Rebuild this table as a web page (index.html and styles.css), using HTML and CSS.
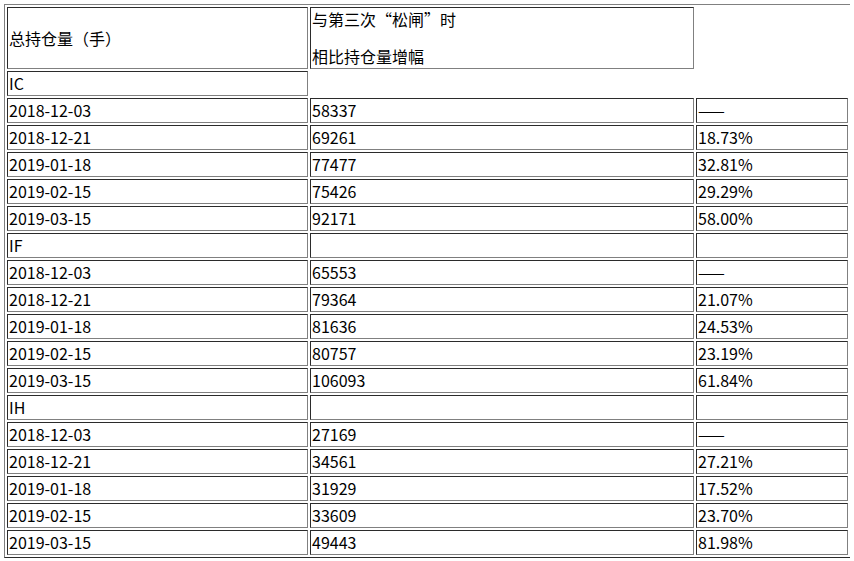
FILE: index.html
```html
<!DOCTYPE html>
<html>
<head>
<meta charset="utf-8">
<link rel="stylesheet" href="styles.css">
</head>
<body>
<table class="data">
  <colgroup>
    <col class="c1"><col class="c2"><col class="c3">
  </colgroup>
  <tr>
    <td class="head">总持仓量（手）</td>
    <td class="head"><div class="l1">与第三次“松闸”时</div><div class="l2">相比持仓量增幅</div></td>
  </tr>
  <tr><td>IC</td></tr>
  <tr><td>2018-12-03</td><td>58337</td><td>——</td></tr>
  <tr><td>2018-12-21</td><td>69261</td><td>18.73%</td></tr>
  <tr><td>2019-01-18</td><td>77477</td><td>32.81%</td></tr>
  <tr><td>2019-02-15</td><td>75426</td><td>29.29%</td></tr>
  <tr><td>2019-03-15</td><td>92171</td><td>58.00%</td></tr>
  <tr><td>IF</td><td></td><td></td></tr>
  <tr><td>2018-12-03</td><td>65553</td><td>——</td></tr>
  <tr><td>2018-12-21</td><td>79364</td><td>21.07%</td></tr>
  <tr><td>2019-01-18</td><td>81636</td><td>24.53%</td></tr>
  <tr><td>2019-02-15</td><td>80757</td><td>23.19%</td></tr>
  <tr><td>2019-03-15</td><td>106093</td><td>61.84%</td></tr>
  <tr><td>IH</td><td></td><td></td></tr>
  <tr><td>2018-12-03</td><td>27169</td><td>——</td></tr>
  <tr><td>2018-12-21</td><td>34561</td><td>27.21%</td></tr>
  <tr><td>2019-01-18</td><td>31929</td><td>17.52%</td></tr>
  <tr><td>2019-02-15</td><td>33609</td><td>23.70%</td></tr>
  <tr><td>2019-03-15</td><td>49443</td><td>81.98%</td></tr>
</table>
</body>
</html>
```
FILE: styles.css
```css
html, body {
  background: #ffffff;
}
body {
  margin: 4px;
  font-family: "Noto Sans CJK SC", "Noto Sans", sans-serif;
  font-size: 16px;
  color: #000000;
}
.data {
  width: 847px;
  table-layout: fixed;
  border-collapse: separate;
  border-spacing: 2px;
  border-style: solid;
  border-width: 1px;
  border-color: #808080 #2b2b2b #2b2b2b #808080;
}
.c1 { width: 301px; }
.c2 { width: 384px; }
.c3 { width: 152px; }
.data td {
  height: 25px;
  box-sizing: border-box;
  padding: 1px;
  line-height: 21px;
  vertical-align: middle;
  text-align: left;
  white-space: nowrap;
  border-style: solid;
  border-width: 1px;
  border-color: #2b2b2b #808080 #808080 #2b2b2b;
}
.data td.head {
  height: 62px;
}
.l1 {
  margin-bottom: 16px;
}
```
